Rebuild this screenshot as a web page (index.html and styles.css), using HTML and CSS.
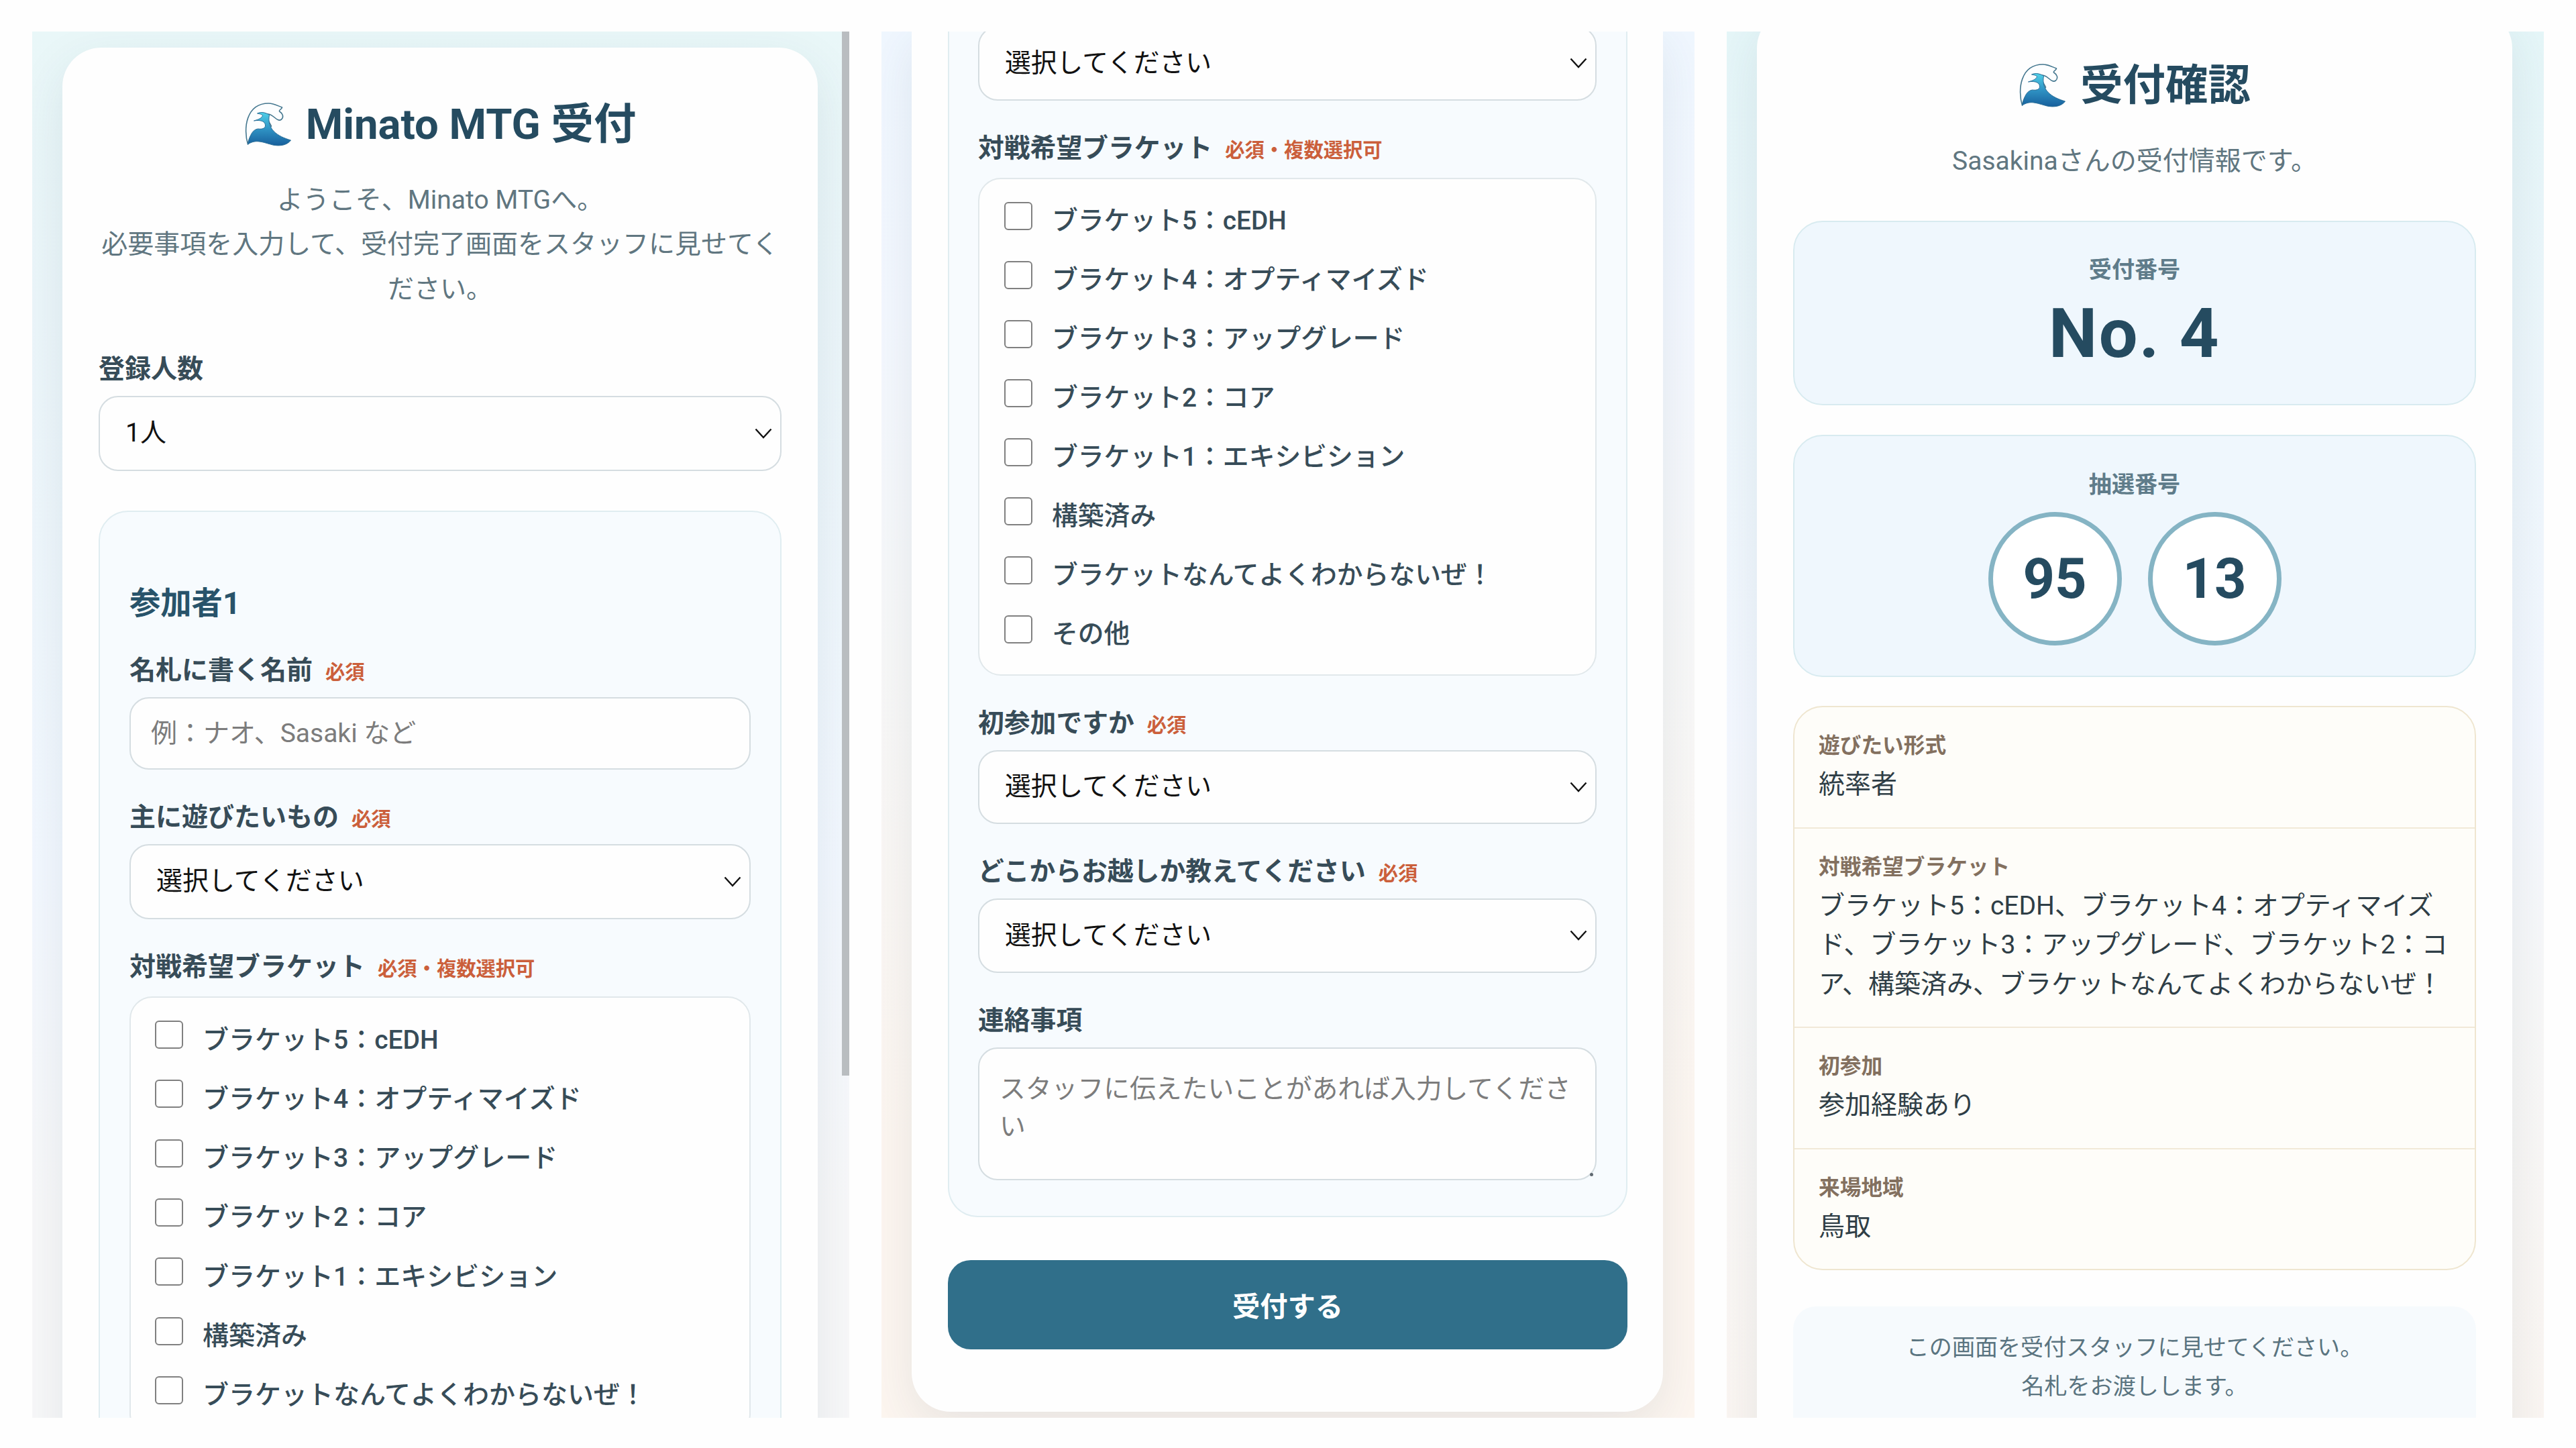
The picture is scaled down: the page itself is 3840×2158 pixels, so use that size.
FILE: index.html
```html
<!DOCTYPE html>
<html lang="ja">
<head>
    <meta charset="UTF-8" />
    <meta name="viewport" content="width=device-width, initial-scale=1.0" />
    <title>Minato MTG 受付</title>
    <link rel="stylesheet" href="styles.css">
</head>
<body>
    <svg class="defs" width="0" height="0">
        <defs>
            <linearGradient id="sea" x1="0" y1="0" x2="0" y2="1">
                <stop offset="0" stop-color="#4fd0e8" />
                <stop offset="0.5" stop-color="#2f93c4" />
                <stop offset="1" stop-color="#175f9c" />
            </linearGradient>
            <symbol id="wave" viewBox="0 0 70 66">
                <path d="M5 63C-2 40 2 2 36 2C44 2 50 6 56 8C55 12 51 11 52 14C57 17 59 22 55 26C48 31 43 17 34 18C32 24 36 28 40 36C34 44 10 34 5 63Z" fill="#fcfeff" stroke="#44778f" stroke-width="1.6" stroke-linejoin="round" />
                <path d="M5 63C8 48 13 41 20 40C27 41 31 39 31 35C31 30 26 26 14 28C21 26 26 24 27 20C24 17 21 18 19 17C26 14 31 16 37 19C33 41 49 51 69 57C63 65 52 66 42 64C27 60 17 55 5 63Z" fill="url(#sea)" stroke="#2b6f98" stroke-width="1" stroke-linejoin="round" />
            </symbol>
            <symbol id="chevron" viewBox="0 0 26 16">
                <path d="M1.5 1.5L13 14L24.5 1.5" fill="none" stroke="#111" stroke-width="2.4" />
            </symbol>
        </defs>
    </svg>

    <div class="screens">
        <!-- 受付フォーム（上部） -->
        <section class="screen screen-top">
            <div class="card">
                <h1><svg class="wave"><use href="#wave" /></svg>Minato MTG 受付</h1>
                <p class="intro">ようこそ、Minato MTGへ。<br>必要事項を入力して、受付完了画面をスタッフに見せてください。</p>

                <label class="label count-label">登録人数</label>
                <div class="select">
                    <select><option>1人</option></select>
                    <svg><use href="#chevron" /></svg>
                </div>

                <div class="person">
                    <h2>参加者1</h2>
                    <label class="label">名札に書く名前<span class="required">必須</span></label>
                    <input class="text" type="text" placeholder="例：ナオ、Sasaki など">

                    <label class="label">主に遊びたいもの<span class="required">必須</span></label>
                    <div class="select">
                        <select><option>選択してください</option></select>
                        <svg><use href="#chevron" /></svg>
                    </div>

                    <label class="label">対戦希望ブラケット<span class="required">必須・複数選択可</span></label>
                    <div class="brackets">
                        <label><input type="checkbox">ブラケット5：cEDH</label>
                        <label><input type="checkbox">ブラケット4：オプティマイズド</label>
                        <label><input type="checkbox">ブラケット3：アップグレード</label>
                        <label><input type="checkbox">ブラケット2：コア</label>
                        <label><input type="checkbox">ブラケット1：エキシビション</label>
                        <label><input type="checkbox">構築済み</label>
                        <label><input type="checkbox">ブラケットなんてよくわからないぜ！</label>
                    </div>
                </div>
            </div>
            <div class="scrollbar"></div>
        </section>

        <!-- 受付フォーム（下部） -->
        <section class="screen screen-bottom">
            <div class="card">
                <div class="person">
                    <div class="select">
                        <select><option>選択してください</option></select>
                        <svg><use href="#chevron" /></svg>
                    </div>

                    <label class="label">対戦希望ブラケット<span class="required">必須・複数選択可</span></label>
                    <div class="brackets">
                        <label><input type="checkbox">ブラケット5：cEDH</label>
                        <label><input type="checkbox">ブラケット4：オプティマイズド</label>
                        <label><input type="checkbox">ブラケット3：アップグレード</label>
                        <label><input type="checkbox">ブラケット2：コア</label>
                        <label><input type="checkbox">ブラケット1：エキシビション</label>
                        <label><input type="checkbox">構築済み</label>
                        <label><input type="checkbox">ブラケットなんてよくわからないぜ！</label>
                        <label><input type="checkbox">その他</label>
                    </div>

                    <label class="label">初参加ですか<span class="required">必須</span></label>
                    <div class="select">
                        <select><option>選択してください</option></select>
                        <svg><use href="#chevron" /></svg>
                    </div>

                    <label class="label">どこからお越しか教えてください<span class="required">必須</span></label>
                    <div class="select">
                        <select><option>選択してください</option></select>
                        <svg><use href="#chevron" /></svg>
                    </div>

                    <label class="label">連絡事項</label>
                    <div class="note">
                        <textarea placeholder="スタッフに伝えたいことがあれば入力してください"></textarea>
                        <span class="grip"></span>
                    </div>
                </div>
                <button class="submit">受付する</button>
            </div>
        </section>

        <!-- 受付確認 -->
        <section class="screen screen-confirm">
            <div class="card">
                <h1><svg class="wave"><use href="#wave" /></svg>受付確認</h1>
                <p class="intro">Sasakinaさんの受付情報です。</p>

                <div class="number-box">
                    <div class="number-label">受付番号</div>
                    <div class="number">No. 4</div>
                </div>

                <div class="number-box lottery">
                    <div class="number-label">抽選番号</div>
                    <div class="balls">
                        <span class="ball">95</span>
                        <span class="ball">13</span>
                    </div>
                </div>

                <dl class="details">
                    <div>
                        <dt>遊びたい形式</dt>
                        <dd>統率者</dd>
                    </div>
                    <div>
                        <dt>対戦希望ブラケット</dt>
                        <dd>ブラケット5：cEDH、ブラケット4：オプティマイズド、ブラケット3：アップグレード、ブラケット2：コア、構築済み、ブラケットなんてよくわからないぜ！</dd>
                    </div>
                    <div>
                        <dt>初参加</dt>
                        <dd>参加経験あり</dd>
                    </div>
                    <div>
                        <dt>来場地域</dt>
                        <dd>鳥取</dd>
                    </div>
                </dl>

                <p class="message">この画面を受付スタッフに見せてください。<br>名札をお渡しします。</p>
            </div>
        </section>
    </div>
</body>
</html>
```
FILE: styles.css
```css
* {
    box-sizing: border-box;
}
body {
    margin: 0;
    background: #fefefe;
    color: #2f3e46;
    font-family: Roboto, "Noto Sans CJK JP", sans-serif;
    font-size: 39px;
}
h1, h2, p, dl, dd {
    margin: 0;
}
.defs {
    position: absolute;
}
.screens {
    display: flex;
    gap: 48px;
    height: 2158px;
    padding: 47px 48px 45px;
}
.screen {
    position: relative;
    width: 1218px;
    padding: 0 47px 0 45px;
    overflow: hidden;
}
.screen-top {
    padding-top: 24px;
    background: linear-gradient(#e9f7f8, #ecf6fa 20%, #f3f8ff 60%, #f8f8f9 85%);
}
.screen-bottom {
    width: 1212px;
    font-size: 38.8px;
    background: linear-gradient(#f0f7ff, #f4f8ff 20%, #f8f8f8 45%, #fdf6f0 80%);
}
.screen-confirm {
    background: linear-gradient(#e5f6f8, #eef7fc 25%, #f4f8ff 50%, #f8f8f8 70%, #fbf6f2);
}
.card {
    padding: 0 54px;
    border-radius: 58px;
    background: #fefefe;
    box-shadow: 0 24px 73px rgba(40, 70, 90, 0.1);
}
.scrollbar {
    position: absolute;
    top: 0;
    right: 0;
    width: 11px;
    height: 1556px;
    background: #b9bdc0;
}

h1 {
    display: flex;
    align-items: center;
    justify-content: center;
    height: 80px;
    color: #254b60;
    font-size: 63.4px;
    line-height: 80px;
}
.wave {
    width: 71px;
    height: 66px;
    margin-right: 21px;
}
.intro {
    margin-top: 40px;
    color: #607680;
    line-height: 66.3px;
    text-align: center;
}

/* Form */
.screen-top .card {
    height: 2200px;
    padding-top: 74px;
}
.label {
    display: block;
    height: 60px;
    margin: 40px 0 11px;
    color: #374c58;
    font-weight: 700;
    line-height: 62px;
}
.count-label {
    margin-top: 55px;
}
.required {
    margin-left: 19px;
    color: #cb5f3b;
    font-size: 29.3px;
}
.select {
    position: relative;
    height: 112px;
}
.select select,
.text,
.note textarea {
    display: block;
    width: 100%;
    height: 100%;
    border: 2.4px solid #d5dde1;
    border-radius: 29px;
    background: #fefefe;
    font: inherit;
    outline: none;
}
.select select {
    appearance: none;
    padding: 0 38px 2px;
    color: #111;
}
.select svg {
    position: absolute;
    top: 50%;
    right: 14px;
    width: 26px;
    height: 16px;
    margin-top: -8px;
}
.text {
    height: 108px;
    padding: 0 30px;
}
::placeholder {
    color: #7c7c7c;
}
.person {
    padding: 105px 44px 53px;
    margin-top: 59px;
    border: 2.4px solid #e0edf1;
    border-radius: 44px;
    background: #f7fbfe;
}
h2 {
    height: 60px;
    color: #28536a;
    font-size: 46.3px;
    line-height: 62px;
}
.brackets {
    margin-top: 15px;
    padding: 17px 36px;
    border: 2.4px solid #e1e8eb;
    border-radius: 34px;
    background: #fefefe;
}
.brackets label {
    display: flex;
    align-items: center;
    height: 88.3px;
    padding-bottom: 5px;
    color: #374c58;
    font-weight: 500;
}
.brackets input {
    appearance: none;
    width: 42px;
    height: 42px;
    margin: 0 29px 7px 0;
    border: 2.8px solid #808080;
    border-radius: 6px;
    background: #fff;
}

.screen-bottom .card {
    padding: 0 53px 93px 54px;
    border-radius: 0 0 58px 58px;
}
.screen-bottom .person {
    margin-top: 0;
    padding: 0 44px 53px 43px;
    border-top: 0;
    border-radius: 0 0 44px 44px;
}
.screen-bottom .person > .select:first-child {
    margin-top: -8px;
}
.screen-bottom .select {
    height: 110.6px;
}
.screen-bottom .brackets label {
    height: 88px;
}
.screen-bottom .brackets {
    padding-left: 37px;
}
.note {
    position: relative;
    height: 198px;
}
.note textarea {
    padding: 32px 30px 28px;
    line-height: 56px;
    resize: none;
}
.grip {
    position: absolute;
    right: 5px;
    bottom: 6px;
    width: 5px;
    height: 5px;
    border-radius: 50%;
    background: #5f6870;
}
.submit {
    display: block;
    width: 100%;
    height: 133px;
    margin-top: 64px;
    border: 0;
    border-radius: 34px;
    background: #306f8a;
    color: #fff;
    font: 700 41.3px Roboto, "Noto Sans CJK JP", sans-serif;
}

/* Confirmation */
.screen-confirm .card {
    height: 2300px;
    margin-top: -33px;
    padding-top: 73px;
}
.number-box {
    height: 275px;
    margin-top: 56px;
    padding-top: 41px;
    border: 2.4px solid #d8ebf0;
    border-radius: 44px;
    background: #eff7fd;
    text-align: center;
}
.number-label {
    height: 60px;
    color: #5f7c8a;
    font-size: 34.1px;
    font-weight: 700;
    line-height: 60px;
}
.number {
    color: #254b60;
    font-size: 102.4px;
    font-weight: 700;
    letter-spacing: 2.4px;
    line-height: 131px;
}
.lottery {
    height: 361px;
    margin-top: 44px;
}
.lottery .number-label {
    line-height: 62px;
}
.balls {
    display: flex;
    justify-content: center;
    gap: 39px;
    margin-top: 12px;
}
.ball {
    width: 199px;
    height: 199px;
    border: 7px solid #85b4c4;
    border-radius: 50%;
    background: #fff;
    color: #254b60;
    font-size: 83px;
    font-weight: 700;
    line-height: 185px;
}
.details {
    margin-top: 43px;
    border: 2.4px solid #efe6d0;
    border-radius: 44px;
    background: #fefdf9;
}
.details div {
    padding: 33px 36px 33px;
}
.details div + div {
    border-top: 2.4px solid #f2e9d8;
}
.details dt {
    height: 50px;
    color: #83705f;
    font-size: 31.7px;
    font-weight: 700;
    line-height: 50px;
}
.details dd {
    margin-top: 3px;
    padding-bottom: 1px;
    line-height: 58.5px;
}
.message {
    height: 240px;
    margin-top: 54px;
    padding-top: 32px;
    border-radius: 34px;
    background: #f6fafd;
    color: #5a7480;
    font-size: 34.1px;
    line-height: 58px;
    text-align: center;
}
```
